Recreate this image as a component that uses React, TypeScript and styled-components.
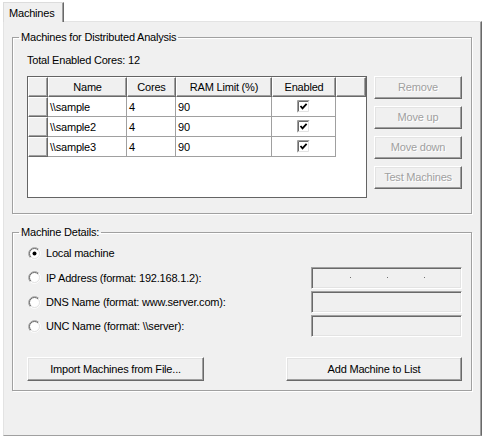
import React from "react";
import styled, { createGlobalStyle } from "styled-components";

const GlobalStyle = createGlobalStyle`
  html, body {
    margin: 0;
    padding: 0;
    background: #fff;
  }
  body {
    font-family: "Liberation Sans", Arial, sans-serif;
    font-size: 11px;
    letter-spacing: -0.2px;
    color: #000;
  }
  * {
    box-sizing: border-box;
  }
`;

const Window = styled.div`
  width: 483px;
  height: 436px;
  padding: 2px 1px 0 3px;
  display: flex;
  flex-direction: column;
  background: #fff;
`;

const TabStrip = styled.div`
  display: flex;
  height: 19px;
  position: relative;
  z-index: 1;
`;

const Tab = styled.div`
  width: 61px;
  height: 20px;
  padding-left: 5px;
  display: flex;
  align-items: center;
  background: #f0f0f0;
  border-style: solid;
  border-width: 1px 1px 0 1px;
  border-color: #dcdcdc #696969 transparent #dcdcdc;
  box-shadow: inset -1px 0 0 #a0a0a0;
`;

const TabPage = styled.div`
  flex: 1;
  background: #f0f0f0;
  border-style: solid;
  border-width: 1px;
  border-color: #e3e3e3 #696969 #a0a0a0 #e3e3e3;
  box-shadow: inset -1px 0 0 #a0a0a0;
  padding: 9px 9px 0 8px;
  display: flex;
  flex-direction: column;
  gap: 12px;
`;

const Group = styled.fieldset`
  margin: 0;
  padding: 0;
  min-width: 0;
  border: 1px solid #a0a0a0;
  box-shadow: 1px 1px 0 #fff, inset 1px 1px 0 #fff;
`;

const Legend = styled.legend`
  margin-left: 6px;
  padding: 0 2px;
  line-height: 13px;
`;

const GroupBody = styled.div<{ $pad: string }>`
  padding: ${(p) => p.$pad};
`;

const Label = styled.div`
  line-height: 13px;
  padding-left: 14px;
`;

const ListArea = styled.div`
  display: flex;
  align-items: flex-start;
  gap: 7px;
  padding: 9px 9px 0 14px;
`;

const Grid = styled.div`
  width: 340px;
  height: 122px;
  border: 1px solid #646464;
  background: #fff;
  display: flex;
  flex-direction: column;
`;

const GridRow = styled.div<{ $h: number }>`
  display: grid;
  grid-template-columns: 20px 79px 49px 96px 64px 1fr;
  height: ${(p) => p.$h}px;
`;

const HeadCell = styled.div`
  background: #f0f0f0;
  border-style: solid;
  border-width: 1px;
  border-color: #fff #696969 #696969 #fff;
  box-shadow: inset -1px -1px 0 #a0a0a0;
  display: flex;
  align-items: center;
  justify-content: center;
  padding-bottom: 1px;
`;

const Cell = styled.div<{ $center?: boolean }>`
  border-right: 1px solid #a0a0a0;
  border-bottom: 1px solid #a0a0a0;
  display: flex;
  align-items: center;
  justify-content: ${(p) => (p.$center ? "center" : "flex-start")};
  padding-left: ${(p) => (p.$center ? 0 : 2)}px;
`;

const EmptyCell = styled.div``;

const Buttons = styled.div`
  display: flex;
  flex-direction: column;
  gap: 7px;
`;

const Button = styled.button<{ $w: number; $h?: number }>`
  width: ${(p) => p.$w}px;
  height: ${(p) => p.$h ?? 23}px;
  margin: 0;
  padding: 0 0 1px;
  font: inherit;
  letter-spacing: inherit;
  background: #f0f0f0;
  color: ${(p) => (p.disabled ? "#a0a0a0" : "#000")};
  text-shadow: ${(p) => (p.disabled ? "1px 1px 0 #fff" : "none")};
  border-style: solid;
  border-width: 1px;
  border-color: #fff #696969 #696969 #fff;
  box-shadow: inset -1px -1px 0 #a0a0a0, inset 1px 1px 0 #e3e3e3;
  border-radius: 0;
`;

const OptionGrid = styled.div`
  display: grid;
  grid-template-columns: 1fr 151px;
  grid-template-rows: 24px 25px 24px 24px;
  padding: 2px 9px 0 15px;
`;

const Option = styled.label`
  display: flex;
  align-items: center;
  gap: 5px;
  grid-column: 1;
`;

const Field = styled.div`
  grid-column: 2;
  align-self: center;
  height: 22px;
  background: #f0f0f0;
  border-style: solid;
  border-width: 1px;
  border-color: #a0a0a0 #fff #fff #a0a0a0;
  box-shadow: inset 1px 1px 0 #696969, inset -1px -1px 0 #e3e3e3;
  display: flex;
  align-items: center;
  gap: 36px;
  padding-left: 38px;
`;

const Dot = styled.span`
  width: 1px;
  height: 1px;
  background: #707070;
`;

const ActionRow = styled.div`
  display: flex;
  justify-content: space-between;
  padding: 19px 9px 9px 14px;
`;

const CheckBox = ({ checked }: { checked: boolean }) => (
  <svg width="13" height="13" viewBox="0 0 13 13">
    <rect x="0" y="0" width="13" height="13" fill="#fff" />
    <path d="M0.5 12.5 V0.5 H12.5" stroke="#a0a0a0" fill="none" />
    <path d="M12.5 0.5 V12.5 H0.5" stroke="#fff" fill="none" />
    <path d="M1.5 11.5 V1.5 H11.5" stroke="#696969" fill="none" />
    <path d="M11.5 1.5 V11.5 H1.5" stroke="#e3e3e3" fill="none" />
    {checked && (
      <polyline
        points="3.5,6 5.5,8.3 9.6,3.8"
        stroke="#000"
        strokeWidth="1.8"
        fill="none"
      />
    )}
  </svg>
);

const Radio = ({ checked }: { checked: boolean }) => (
  <svg width="13" height="13" viewBox="0 0 13 13">
    <circle cx="6.5" cy="6.5" r="5" fill="#fff" />
    <path d="M2.26 10.74 A6 6 0 0 1 10.74 2.26" stroke="#a0a0a0" fill="none" />
    <path d="M10.74 2.26 A6 6 0 0 1 2.26 10.74" stroke="#fff" fill="none" />
    <path d="M2.96 10.04 A5 5 0 0 1 10.04 2.96" stroke="#696969" fill="none" />
    <path d="M10.04 2.96 A5 5 0 0 1 2.96 10.04" stroke="#e3e3e3" fill="none" />
    {checked && <circle cx="6.5" cy="6.5" r="2" fill="#000" />}
  </svg>
);

const machines = [
  { name: "\\\\sample", cores: 4, ram: 90, enabled: true },
  { name: "\\\\sample2", cores: 4, ram: 90, enabled: true },
  { name: "\\\\sample3", cores: 4, ram: 90, enabled: true },
];

const options = [
  { label: "Local machine", checked: true, field: false, ip: false },
  { label: "IP Address (format: 192.168.1.2):", checked: false, field: true, ip: true },
  { label: "DNS Name (format: www.server.com):", checked: false, field: true, ip: false },
  { label: "UNC Name (format: \\\\server):", checked: false, field: true, ip: false },
];

const App = () => {
  return (
    <Window>
      <GlobalStyle />
      <TabStrip>
        <Tab>Machines</Tab>
      </TabStrip>
      <TabPage>
        <Group>
          <Legend>Machines for Distributed Analysis</Legend>
          <GroupBody $pad="10px 0 15px">
            <Label>Total Enabled Cores: 12</Label>
            <ListArea>
              <Grid>
                <GridRow $h={20}>
                  <HeadCell />
                  <HeadCell>Name</HeadCell>
                  <HeadCell>Cores</HeadCell>
                  <HeadCell>RAM Limit (%)</HeadCell>
                  <HeadCell>Enabled</HeadCell>
                  <HeadCell />
                </GridRow>
                {machines.map((m) => (
                  <GridRow $h={20} key={m.name}>
                    <HeadCell />
                    <Cell>{m.name}</Cell>
                    <Cell>{m.cores}</Cell>
                    <Cell>{m.ram}</Cell>
                    <Cell $center>
                      <CheckBox checked={m.enabled} />
                    </Cell>
                    <EmptyCell />
                  </GridRow>
                ))}
              </Grid>
              <Buttons>
                <Button $w={88} disabled>Remove</Button>
                <Button $w={88} disabled>Move up</Button>
                <Button $w={88} disabled>Move down</Button>
                <Button $w={88} disabled>Test Machines</Button>
              </Buttons>
            </ListArea>
          </GroupBody>
        </Group>

        <Group>
          <Legend>Machine Details:</Legend>
          <OptionGrid>
            {options.map((o) => (
              <React.Fragment key={o.label}>
                <Option>
                  <Radio checked={o.checked} />
                  {o.label}
                </Option>
                {o.field ? (
                  <Field>
                    {o.ip && (
                      <>
                        <Dot />
                        <Dot />
                        <Dot />
                      </>
                    )}
                  </Field>
                ) : (
                  <span />
                )}
              </React.Fragment>
            ))}
          </OptionGrid>
          <ActionRow>
            <Button $w={177} $h={24}>Import Machines from File...</Button>
            <Button $w={176} $h={24}>Add Machine to List</Button>
          </ActionRow>
        </Group>
      </TabPage>
    </Window>
  );
};

export default App;
